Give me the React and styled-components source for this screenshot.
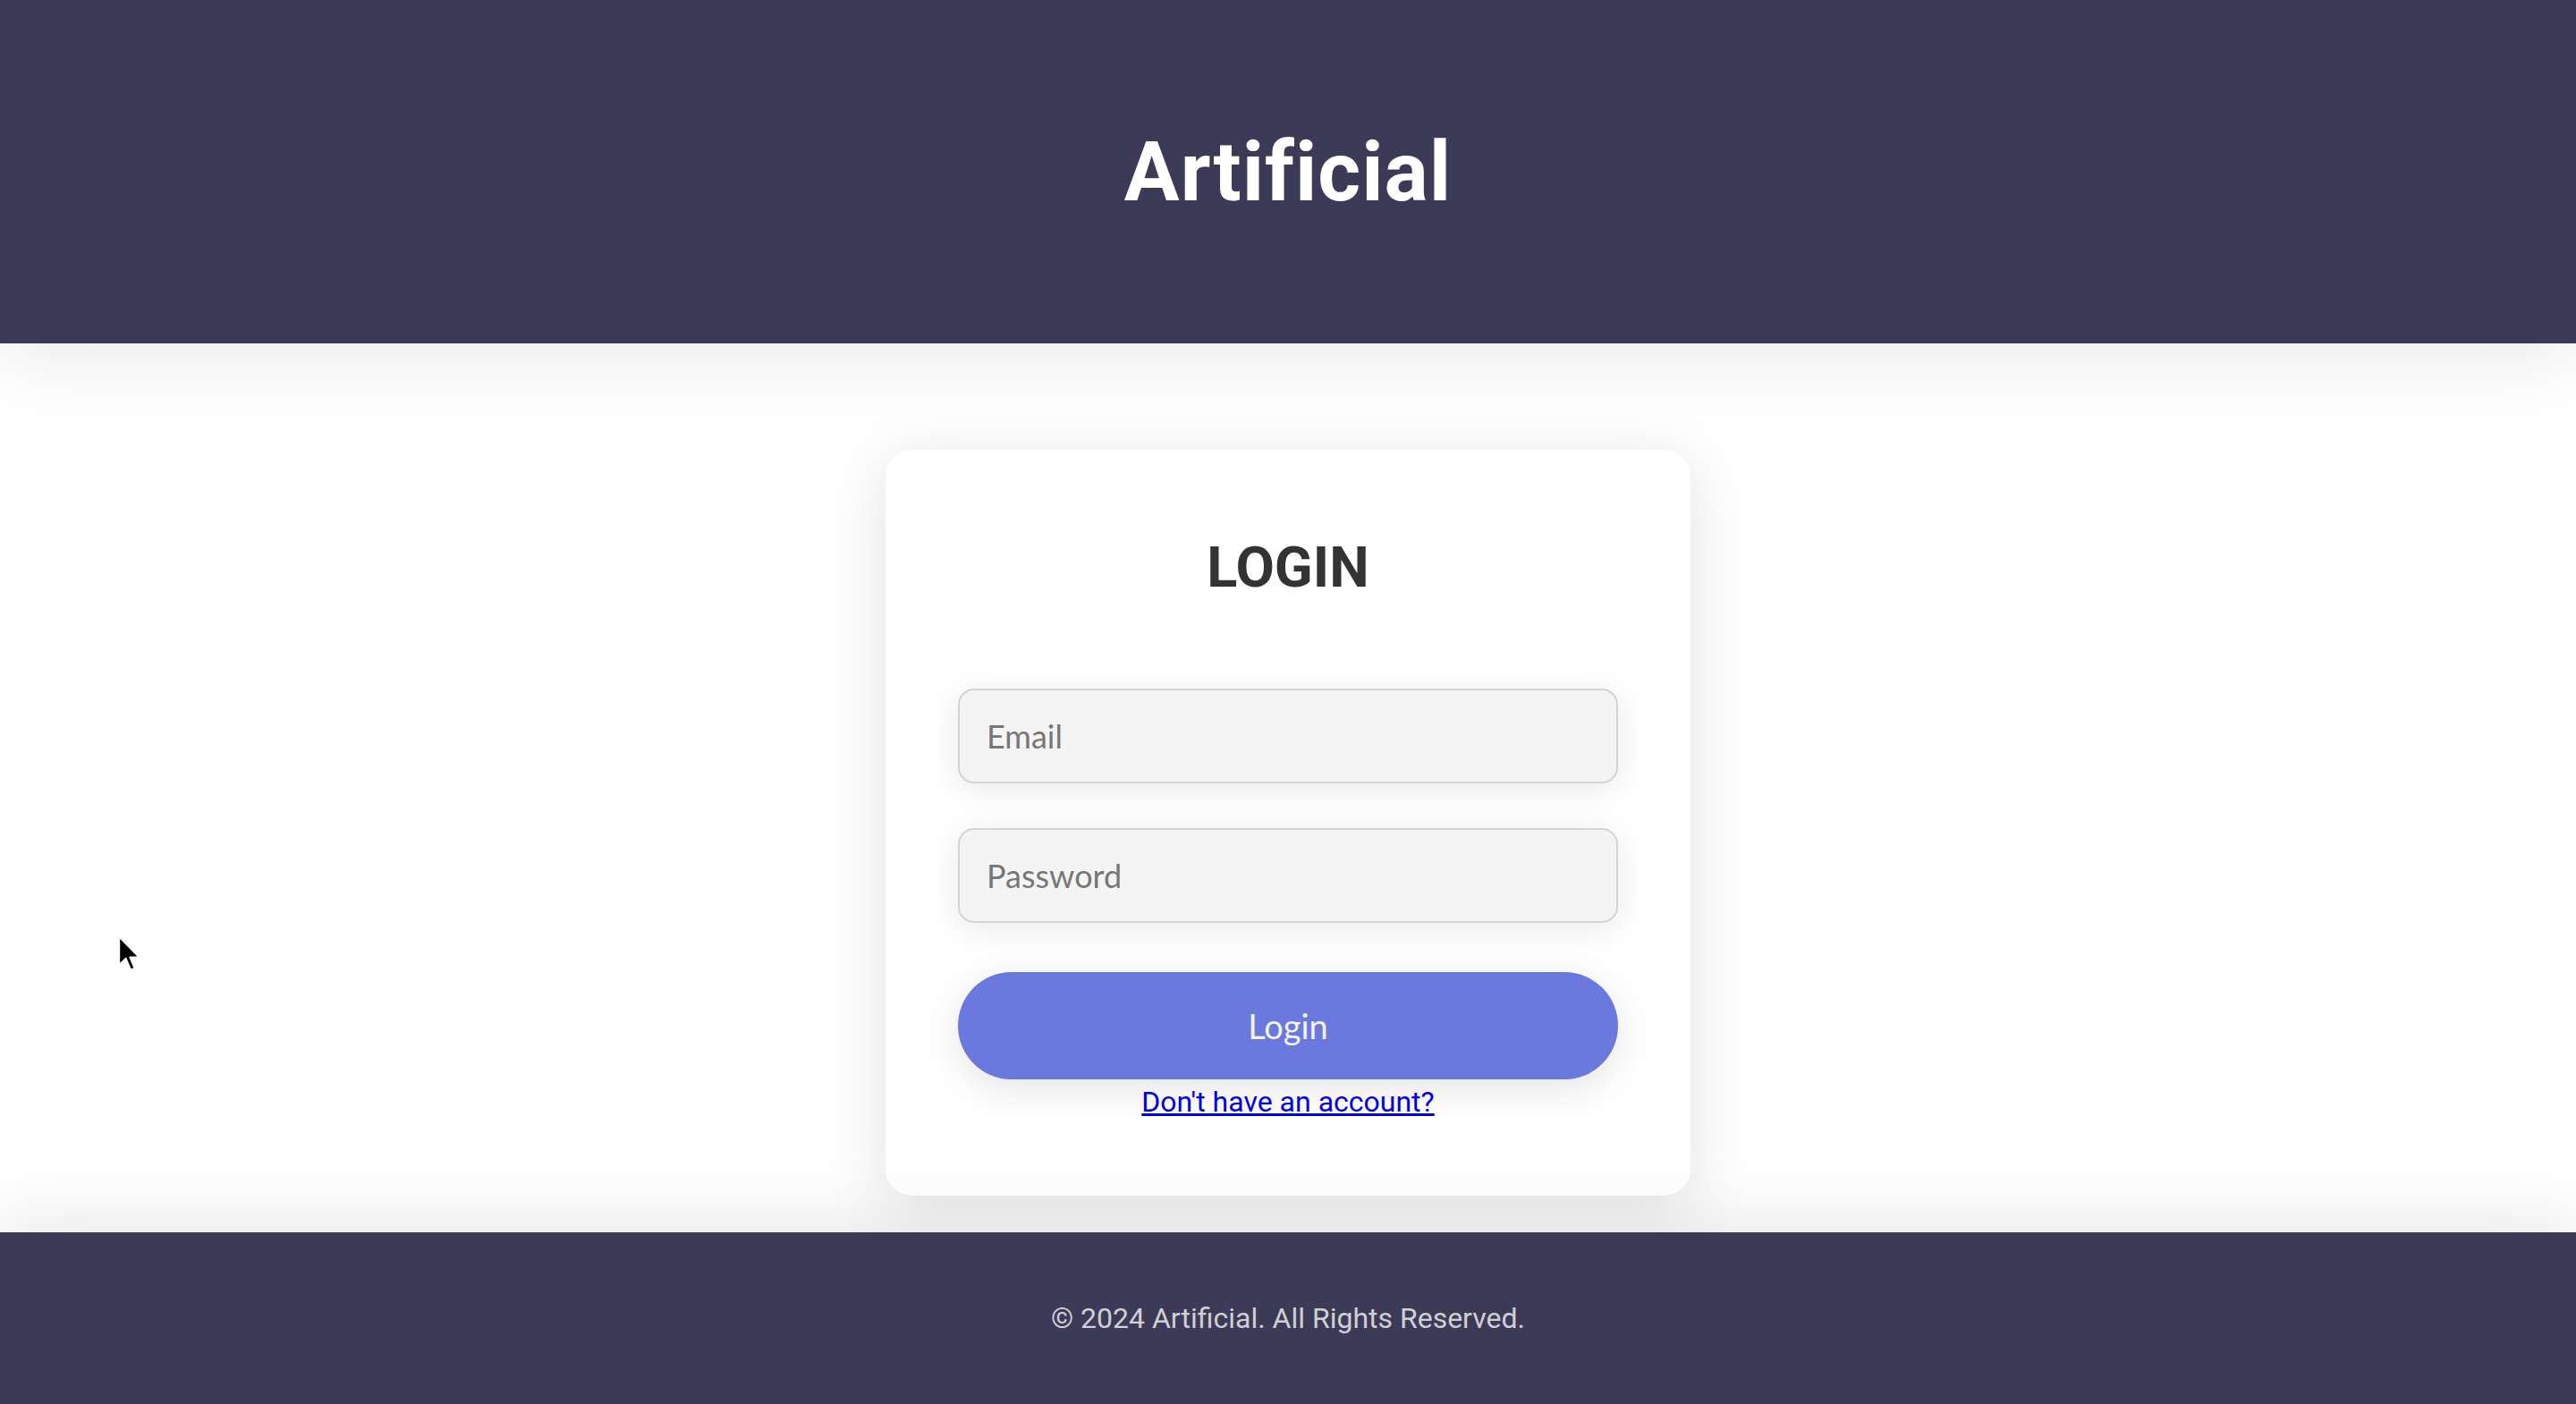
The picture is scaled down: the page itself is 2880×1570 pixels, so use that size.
import React from 'react';
import styled, { createGlobalStyle } from 'styled-components';

/**
 * login page
 *
 */

const GlobalStyle = createGlobalStyle`
  html, body {
    margin: 0;
    padding: 0;
    background: #ffffff;
  }

  * {
    box-sizing: border-box;
  }
`;

const Page = styled.div`
  display: flex;
  flex-direction: column;
  min-height: 100vh;
  font-family: Roboto, "Liberation Sans", sans-serif;
  position: relative;
  overflow: hidden;
`;

const Header = styled.header`
  position: relative;
  z-index: 2;
  height: 384px;
  display: flex;
  align-items: center;
  justify-content: center;
  background-color: #3c3a57;
  box-shadow: 0 10px 90px rgba(0, 0, 0, 0.1);
`;

const Brand = styled.h1`
  margin: 0;
  color: #ffffff;
  font-family: Roboto, sans-serif;
  font-weight: 700;
  font-size: 92px;
  letter-spacing: 1px;
`;

const Main = styled.main`
  flex: 1;
  display: flex;
  justify-content: center;
  align-items: flex-start;
  padding: 119px 0 40px;
  background-color: #ffffff;
`;

const Card = styled.section`
  width: 900px;
  padding: 95px 81px 86px;
  display: flex;
  flex-direction: column;
  background-color: #ffffff;
  border-radius: 30px;
  box-shadow: 0 14px 70px rgba(0, 0, 0, 0.12);
`;

const Title = styled.h2`
  margin: 0 0 99px;
  text-align: center;
  color: #333333;
  font-family: Roboto, sans-serif;
  font-weight: 700;
  font-size: 63px;
  line-height: normal;
`;

const Form = styled.form`
  display: flex;
  flex-direction: column;
`;

const Input = styled.input`
  width: 100%;
  height: 106px;
  margin-bottom: ${({ gap }) => gap}px;
  padding: 0 30px;
  border: 2px solid #d4d4d4;
  border-radius: 18px;
  background-color: #f4f4f4;
  color: #333333;
  font-family: Lato, "Noto Sans", sans-serif;
  font-size: 36px;
  outline: none;
  box-shadow: 0 6px 36px rgba(0, 0, 0, 0.09);

  &::placeholder {
    color: #777777;
  }
`;

const SubmitButton = styled.button`
  width: 100%;
  height: 120px;
  border: none;
  border-radius: 60px;
  background-color: #6b79de;
  color: #f2f2f8;
  font-family: Lato, "Noto Sans", sans-serif;
  font-size: 38px;
  cursor: pointer;
  box-shadow: 0 10px 44px rgba(0, 0, 0, 0.11);
`;

const RegisterLink = styled.a`
  align-self: center;
  margin-top: 6px;
  color: #0000ee;
  font-family: Roboto, sans-serif;
  font-size: 32px;
  line-height: normal;
  text-decoration: underline;
`;

const Footer = styled.footer`
  position: relative;
  z-index: 2;
  height: 192px;
  display: flex;
  align-items: center;
  justify-content: center;
  background-color: #3c3a57;
  box-shadow: 0 -10px 80px rgba(0, 0, 0, 0.1);
`;

const Copyright = styled.p`
  margin: 0;
  color: #cfcfd6;
  font-family: Roboto, sans-serif;
  font-size: 32px;
`;

const Pointer = styled.svg`
  position: absolute;
  left: 131px;
  top: 1045px;
  z-index: 5;
  pointer-events: none;
`;

const App = () => (
  <Page>
    <GlobalStyle />

    <Header>
      <Brand>Artificial</Brand>
    </Header>

    <Main>
      <Card>
        <Title>LOGIN</Title>

        <Form onSubmit={e => e.preventDefault()}>
          <Input type="email" placeholder="Email" gap={50} />
          <Input type="password" placeholder="Password" gap={55} />
          <SubmitButton type="submit">Login</SubmitButton>
        </Form>

        <RegisterLink href="#register">Don't have an account?</RegisterLink>
      </Card>
    </Main>

    <Footer>
      <Copyright>© 2024 Artificial. All Rights Reserved.</Copyright>
    </Footer>

    {/* mouse pointer caught in the shot */}
    <Pointer width="30" height="45" viewBox="0 0 14 21">
      <path
        d="M1 1 L1 16 L4.5 12.6 L7 18.5 L9.2 17.6 L6.8 11.9 L11.6 11.9 Z"
        fill="#000000"
        stroke="#ffffff"
        strokeWidth="1"
        strokeLinejoin="round"
      />
    </Pointer>
  </Page>
);

export default App;
